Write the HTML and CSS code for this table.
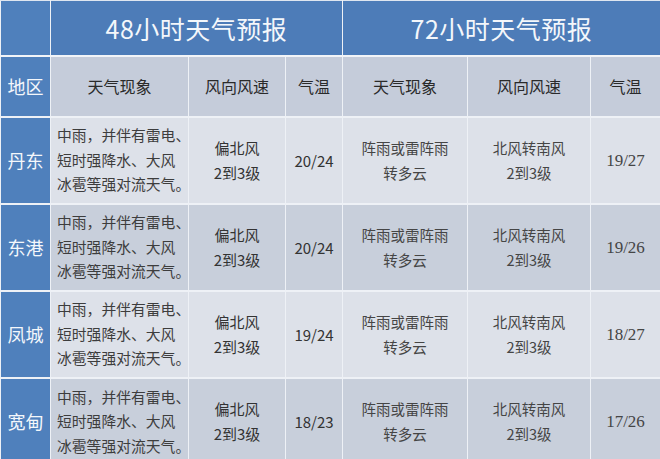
FILE: index.html
```html
<!DOCTYPE html>
<html lang="zh">
<head>
<meta charset="utf-8">
<title>天气预报</title>
<link rel="stylesheet" href="styles.css">
</head>
<body>
<table class="forecast">
  <colgroup>
    <col class="c-area">
    <col class="c-desc48">
    <col class="c-wind48">
    <col class="c-temp48">
    <col class="c-desc72">
    <col class="c-wind72">
    <col class="c-temp72">
  </colgroup>
  <thead>
    <tr class="title-row">
      <th class="area-cell"></th>
      <th colspan="3" class="title">48小时天气预报</th>
      <th colspan="3" class="title">72小时天气预报</th>
    </tr>
    <tr class="head-row">
      <th class="area-cell area-head">地区</th>
      <th>天气现象</th>
      <th>风向风速</th>
      <th>气温</th>
      <th>天气现象</th>
      <th>风向风速</th>
      <th>气温</th>
    </tr>
  </thead>
  <tbody>
    <tr class="row light">
      <th class="area-cell area">丹东</th>
      <td class="desc">中雨，并伴有雷电、<br>短时强降水、大风<br>冰雹等强对流天气。</td>
      <td class="wind">偏北风<br>2到3级</td>
      <td class="temp">20/24</td>
      <td class="serif">阵雨或雷阵雨<br>转多云</td>
      <td class="serif">北风转南风<br>2到3级</td>
      <td class="serif temp2">19/27</td>
    </tr>
    <tr class="row dark">
      <th class="area-cell area">东港</th>
      <td class="desc">中雨，并伴有雷电、<br>短时强降水、大风<br>冰雹等强对流天气。</td>
      <td class="wind">偏北风<br>2到3级</td>
      <td class="temp">20/24</td>
      <td class="serif">阵雨或雷阵雨<br>转多云</td>
      <td class="serif">北风转南风<br>2到3级</td>
      <td class="serif temp2">19/26</td>
    </tr>
    <tr class="row light">
      <th class="area-cell area">凤城</th>
      <td class="desc">中雨，并伴有雷电、<br>短时强降水、大风<br>冰雹等强对流天气。</td>
      <td class="wind">偏北风<br>2到3级</td>
      <td class="temp">19/24</td>
      <td class="serif">阵雨或雷阵雨<br>转多云</td>
      <td class="serif">北风转南风<br>2到3级</td>
      <td class="serif temp2">18/27</td>
    </tr>
    <tr class="row dark">
      <th class="area-cell area">宽甸</th>
      <td class="desc">中雨，并伴有雷电、<br>短时强降水、大风<br>冰雹等强对流天气。</td>
      <td class="wind">偏北风<br>2到3级</td>
      <td class="temp">18/23</td>
      <td class="serif">阵雨或雷阵雨<br>转多云</td>
      <td class="serif">北风转南风<br>2到3级</td>
      <td class="serif temp2">17/26</td>
    </tr>
  </tbody>
</table>
</body>
</html>
```

FILE: styles.css
```css
html, body {
  margin: 0;
  padding: 0;
  background: #c9d0dc;
}

.forecast {
  width: 660px;
  table-layout: fixed;
  border-collapse: collapse;
  font-family: "Noto Sans CJK SC", "Noto Sans", sans-serif;
  color: #3b3b3b;
}

.c-area { width: 50px; }
.c-desc48 { width: 138px; }
.c-wind48 { width: 97px; }
.c-temp48 { width: 57px; }
.c-desc72 { width: 125px; }
.c-wind72 { width: 123px; }
.c-temp72 { width: 70px; }

.forecast th,
.forecast td {
  border: 1px solid #eef1f6;
  padding: 0;
  text-align: center;
  vertical-align: middle;
  font-weight: normal;
  white-space: nowrap;
}

.title-row { height: 55px; }
.title-row th {
  background: #4d7cb8;
  border-top: 1px solid #dfe6f0;
  border-bottom: 2px solid #f2f4f8;
}
.title {
  color: #f4f7fb;
  font-size: 25px;
  font-weight: 300;
  letter-spacing: 0.5px;
}

.head-row { height: 61px; }
.head-row th {
  background: #c5ccda;
  font-size: 16px;
  color: #2a2a2a;
}

.area-cell {
  background: #4f80bc !important;
  color: #f4f7fb !important;
}
.area-head { font-size: 18px !important; }
.area { font-size: 18px; }

.row { height: 87px; }
.row th, .row td { border-top: 2px solid #eef1f6; }
.light td { background: #dde1e9; }
.dark td { background: #c8cfdb; }

.desc {
  text-align: left !important;
  padding-left: 6px !important;
  font-size: 14.8px;
  line-height: 24.5px;
  color: #3d3d3d;
  overflow: visible;
}

.wind {
  font-size: 15px;
  line-height: 25px;
  color: #333;
}

.temp {
  font-size: 15px;
  color: #333;
}

.serif {
  font-size: 14.5px;
  line-height: 25px;
  color: #454545;
}

.temp2 {
  font-family: "Liberation Serif", "Noto Sans CJK SC", serif;
  font-size: 17px;
}
```
